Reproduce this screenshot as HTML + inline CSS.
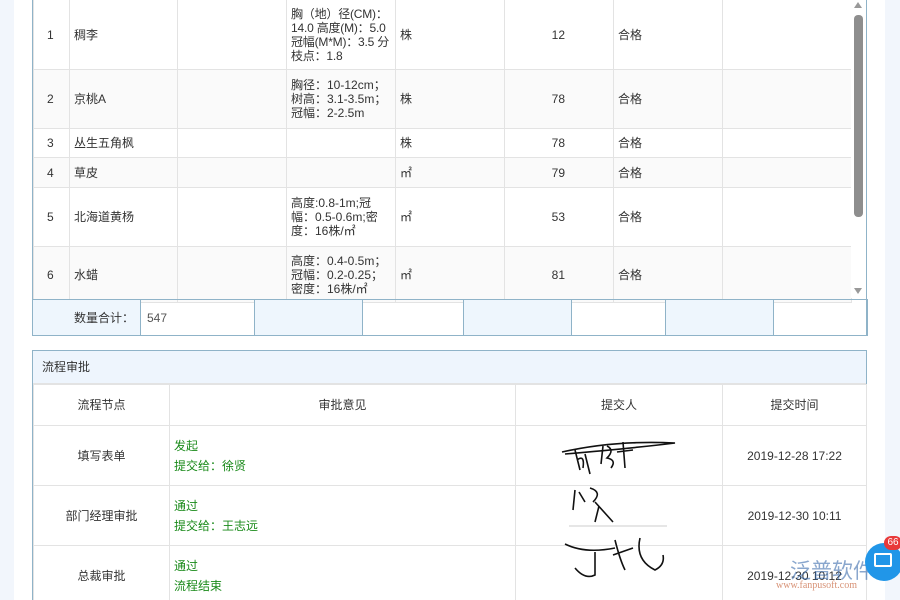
<!DOCTYPE html>
<html><head><meta charset="utf-8"><style>
*{margin:0;padding:0;box-sizing:border-box}
html,body{width:900px;height:600px;overflow:hidden}
body{background:#f2f6fc;font-family:"Liberation Sans","Noto Sans CJK SC",sans-serif;font-size:12px;color:#333;position:relative}
.panel{position:absolute;left:14px;top:0;width:871px;height:600px;background:#fff}
.a{position:absolute}
.t{position:absolute;border-collapse:collapse;table-layout:fixed}
.t td{border:1px solid #e3e3e3;padding:0 4px;line-height:14px}
.g{color:#1a8a1a;line-height:20px}
.sp td:nth-child(4){padding:0 0 0 4px}
.r1 td:nth-child(4){letter-spacing:-0.2px}
</style></head><body>
<div class="panel"></div>
<div class="a" style="left:32px;top:-1px;width:835px;height:337px;border:1px solid #8fb3c8;"></div>
<table class="t sp" style="left:33px;top:-1px;width:818px">
<colgroup><col style="width:36px"><col style="width:108px"><col style="width:109px"><col style="width:109px"><col style="width:109px"><col style="width:109px"><col style="width:109px"><col style="width:129px"></colgroup>
<tr class="r1" style="height:70px"><td style="padding-left:13px">1</td><td>稠李</td><td></td><td>胸（地）径(CM)：14.0 高度(M)：5.0 冠幅(M*M)：3.5 分枝点：1.8</td><td>株</td><td style="text-align:right;padding-right:48px">12</td><td>合格</td><td></td></tr>
<tr style="height:59px;background:#fafafa"><td style="padding-left:13px">2</td><td>京桃A</td><td></td><td>胸径：10-12cm；<br>树高：3.1-3.5m；<br>冠幅：2-2.5m</td><td>株</td><td style="text-align:right;padding-right:48px">78</td><td>合格</td><td></td></tr>
<tr style="height:29px"><td style="padding-left:13px">3</td><td>丛生五角枫</td><td></td><td></td><td>株</td><td style="text-align:right;padding-right:48px">78</td><td>合格</td><td></td></tr>
<tr style="height:30px;background:#fafafa"><td style="padding-left:13px">4</td><td>草皮</td><td></td><td></td><td>㎡</td><td style="text-align:right;padding-right:48px">79</td><td>合格</td><td></td></tr>
<tr style="height:59px"><td style="padding-left:13px">5</td><td>北海道黄杨</td><td></td><td>高度:0.8-1m;冠<br>幅：0.5-0.6m;密<br>度：16株/㎡</td><td>㎡</td><td style="text-align:right;padding-right:48px">53</td><td>合格</td><td></td></tr>
<tr style="height:56px;background:#fafafa"><td style="padding-left:13px">6</td><td>水蜡</td><td></td><td>高度：0.4-0.5m；<br>冠幅：0.2-0.25；<br>密度：16株/㎡</td><td>㎡</td><td style="text-align:right;padding-right:48px">81</td><td>合格</td><td></td></tr>
</table>
<div class="a" style="left:851px;top:0;width:15px;height:298px;background:#fff"></div>
<div class="a" style="left:854px;top:15px;width:9px;height:202px;background:#8e8e8e;border-radius:4px"></div>
<div class="a" style="left:854px;top:2px;width:0;height:0;border-left:4px solid transparent;border-right:4px solid transparent;border-bottom:6px solid #999"></div>
<div class="a" style="left:854px;top:288px;width:0;height:0;border-left:4px solid transparent;border-right:4px solid transparent;border-top:6px solid #999"></div>
<table class="t" style="left:32px;top:299px;width:835px;height:37px">
<colgroup><col style="width:108px"><col style="width:114px"><col style="width:108px"><col style="width:101px"><col style="width:108px"><col style="width:94px"><col style="width:108px"><col style="width:94px"></colgroup>
<tr><td style="border:1px solid #8fb3c8;background:#eef6fd;text-align:right;padding-right:6px">数量合计：</td><td style="border:1px solid #8fb3c8;padding-left:6px;color:#555">547</td><td style="border:1px solid #8fb3c8;background:#eef6fd"></td><td style="border:1px solid #8fb3c8"></td><td style="border:1px solid #8fb3c8;background:#eef6fd"></td><td style="border:1px solid #8fb3c8"></td><td style="border:1px solid #8fb3c8;background:#eef6fd"></td><td style="border:1px solid #8fb3c8"></td></tr>
</table>
<div class="a" style="left:32px;top:350px;width:835px;height:260px;border:1px solid #8fb3c8;"></div>
<div class="a" style="left:33px;top:351px;width:833px;height:33px;background:#eef5fd;border-bottom:1px solid #e3e3e3;line-height:33px;padding-left:9px">流程审批</div>
<table class="t" style="left:33px;top:384px;width:833px;text-align:center">
<colgroup><col style="width:136px"><col style="width:346px"><col style="width:207px"><col style="width:144px"></colgroup>
<tr style="height:41px"><td>流程节点</td><td>审批意见</td><td>提交人</td><td>提交时间</td></tr>
<tr style="height:60px"><td>填写表单</td><td style="text-align:left"><div class="g">发起<br>提交给：徐贤</div></td><td></td><td>2019-12-28 17:22</td></tr>
<tr style="height:60px"><td>部门经理审批</td><td style="text-align:left"><div class="g">通过<br>提交给：王志远</div></td><td></td><td>2019-12-30 10:11</td></tr>
<tr style="height:60px"><td>总裁审批</td><td style="text-align:left"><div class="g">通过<br>流程结束</div></td><td></td><td>2019-12-30 10:12</td></tr>
</table>
<svg class="a" style="left:555px;top:430px" width="130" height="170" viewBox="0 0 130 170" fill="none" stroke="#111" stroke-width="1.6">
<path d="M7 22 Q60 10 120 13 Q80 18 10 24"/><path d="M20 20 L25 40 M22 30 Q30 24 28 38 M30 24 L35 44"/><path d="M48 16 L46 34 M52 16 Q60 20 52 28 Q62 30 56 38"/><path d="M68 12 L70 38 M62 22 L78 20"/>
<path d="M20 60 L18 80 M24 62 L30 72 M35 58 Q48 62 38 72 M40 72 L58 92 M44 76 L40 92" /><path d="M14 96 L112 96" stroke="#ccc" stroke-width="1"/>
<path d="M10 114 Q30 124 60 118 M40 122 L40 145 Q30 150 20 138 M60 110 Q65 130 70 140 M58 125 L78 118 M85 108 Q80 130 100 140 Q110 135 108 125"/>
</svg>
<div class="a" style="left:790px;top:555px;color:#2a5fa5;font-size:21px;opacity:.55">泛普软件</div>
<div class="a" style="left:776px;top:580px;color:#c7643c;font-size:10px;font-family:'Liberation Serif',serif;opacity:.7">www.fanpusoft.com</div>
<div class="a" style="left:865px;top:543px;width:38px;height:38px;border-radius:50%;background:#2196e8"></div>
<div class="a" style="left:874px;top:553px;width:18px;height:14px;border:2px solid #fff;border-radius:2px"></div>
<div class="a" style="left:884px;top:536px;width:18px;height:14px;border-radius:7px;background:#e83a3a;color:#fff;font-size:10px;line-height:14px;text-align:center">66</div>
</body></html>
